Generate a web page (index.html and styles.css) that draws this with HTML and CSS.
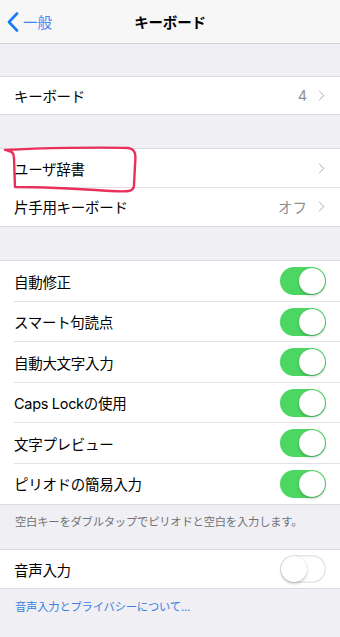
FILE: index.html
```html
<!DOCTYPE html>
<html lang="ja">
<head>
<meta charset="utf-8">
<title>キーボード</title>
<link rel="stylesheet" href="styles.css">
</head>
<body>
<div class="screen">
  <header class="nav">
    <div class="back">
      <svg class="back-chev" width="12" height="20" viewBox="0 0 12 20"><path d="M10 1.5 L2 10 L10 18.5" fill="none" stroke="#1a7cf2" stroke-width="2.6" stroke-linecap="round" stroke-linejoin="round"/></svg>
      <span>一般</span>
    </div>
    <div class="title">キーボード</div>
  </header>

  <section class="group first">
    <div class="row"><span class="label">キーボード</span><span class="value">4</span><span class="chev"></span></div>
  </section>

  <section class="group second">
    <div class="row sep"><span class="label">ユーザ辞書</span><span class="chev"></span></div>
    <div class="row"><span class="label">片手用キーボード</span><span class="value">オフ</span><span class="chev"></span></div>
  </section>

  <section class="group toggles">
    <div class="row sep"><span class="label">自動修正</span><span class="switch on"></span></div>
    <div class="row sep"><span class="label">スマート句読点</span><span class="switch on"></span></div>
    <div class="row sep"><span class="label">自動大文字入力</span><span class="switch on"></span></div>
    <div class="row sep"><span class="label">Caps Lockの使用</span><span class="switch on"></span></div>
    <div class="row sep"><span class="label">文字プレビュー</span><span class="switch on"></span></div>
    <div class="row"><span class="label">ピリオドの簡易入力</span><span class="switch on"></span></div>
  </section>
  <p class="note">空白キーをダブルタップでピリオドと空白を入力します。</p>

  <section class="group voice">
    <div class="row"><span class="label">音声入力</span><span class="switch off"></span></div>
  </section>
  <p class="note link">音声入力とプライバシーについて...</p>
  <p class="note cut">ショートカット</p>

  <svg class="mark" width="340" height="637" viewBox="0 0 340 637"><path d="M5 150 C40 148 100 147 128 148 C136 149 136 155 135 165 L134 185 C134 192 128 192 110 191 C80 189 40 187 15 187 L14 158 C14 153 12 151 8 151" fill="none" stroke="#e8305a" stroke-width="2.4" stroke-linecap="round" stroke-linejoin="round"/></svg>
</div>
</body>
</html>
```

FILE: styles.css
```css
* { box-sizing: border-box; }
html, body { margin: 0; padding: 0; }
body {
  background: #efeff4;
  font-family: "Inter", "Noto Sans CJK JP", sans-serif;
  color: #000;
  width: 340px;
  height: 637px;
  overflow: hidden;
}
.screen { position: relative; width: 340px; height: 637px; overflow: hidden; }
.nav {
  height: 44px;
  background: #f7f7f8;
  border-bottom: 1px solid #d3d3d6;
  display: flex;
  align-items: center;
  justify-content: center;
  position: relative;
}
.back {
  position: absolute;
  left: 7px;
  top: 0;
  height: 43px;
  display: flex;
  align-items: center;
  gap: 4px;
  color: #3b87f5;
  font-size: 14.5px;
}
.back-chev { display: block; }
.title { font-size: 14.5px; font-weight: 700; letter-spacing: -0.2px; }
.group {
  background: #fff;
  border-top: 1px solid #dcdce0;
  border-bottom: 1px solid #dcdce0;
  margin-top: 33px;
}
.group.first { margin-top: 32px; }
.row {
  height: 38.5px;
  display: flex;
  align-items: center;
  padding: 0 14px;
  position: relative;
  font-size: 14.5px;
}
.first .row { height: 37px; }
.row.sep::after {
  content: "";
  position: absolute;
  left: 14px;
  right: 0;
  bottom: 0;
  height: 1px;
  background: #e2e2e6;
}
.label { flex: 1; letter-spacing: -0.3px; }
.value { color: #8e8e93; margin-right: 9px; font-size: 14.5px; }
.chev {
  width: 7px;
  height: 7px;
  border-top: 1.6px solid #c4c4c8;
  border-right: 1.6px solid #c4c4c8;
  transform: rotate(45deg);
  margin-right: 3px;
}
.toggles .row { height: 40.5px; }
.switch {
  width: 46px;
  height: 28px;
  border-radius: 14px;
  position: relative;
  flex: none;
}
.switch::after {
  content: "";
  position: absolute;
  top: 1px;
  width: 26px;
  height: 26px;
  border-radius: 50%;
  background: #fff;
  box-shadow: 0 2px 3px rgba(0,0,0,0.18), 0 0 1px rgba(0,0,0,0.2);
}
.switch.on { background: #4cd762; }
.switch.on::after { right: 1px; }
.switch.off { background: #fff; box-shadow: inset 0 0 0 1.5px #e6e6ea; }
.switch.off::after { left: 1px; }
.note {
  margin: 0;
  padding: 8px 15px 0;
  font-size: 11.3px;
  color: #707075;
  letter-spacing: -0.2px;
  height: 44px;
}
.voice { margin-top: 0; }
.voice .row { height: 38px; }
.note.link { color: #3b7fe0; height: 30px; padding-top: 9px; }
.note.cut { padding-top: 17px; color: #707075; }
.mark { position: absolute; left: 0; top: 0; pointer-events: none; }
```
